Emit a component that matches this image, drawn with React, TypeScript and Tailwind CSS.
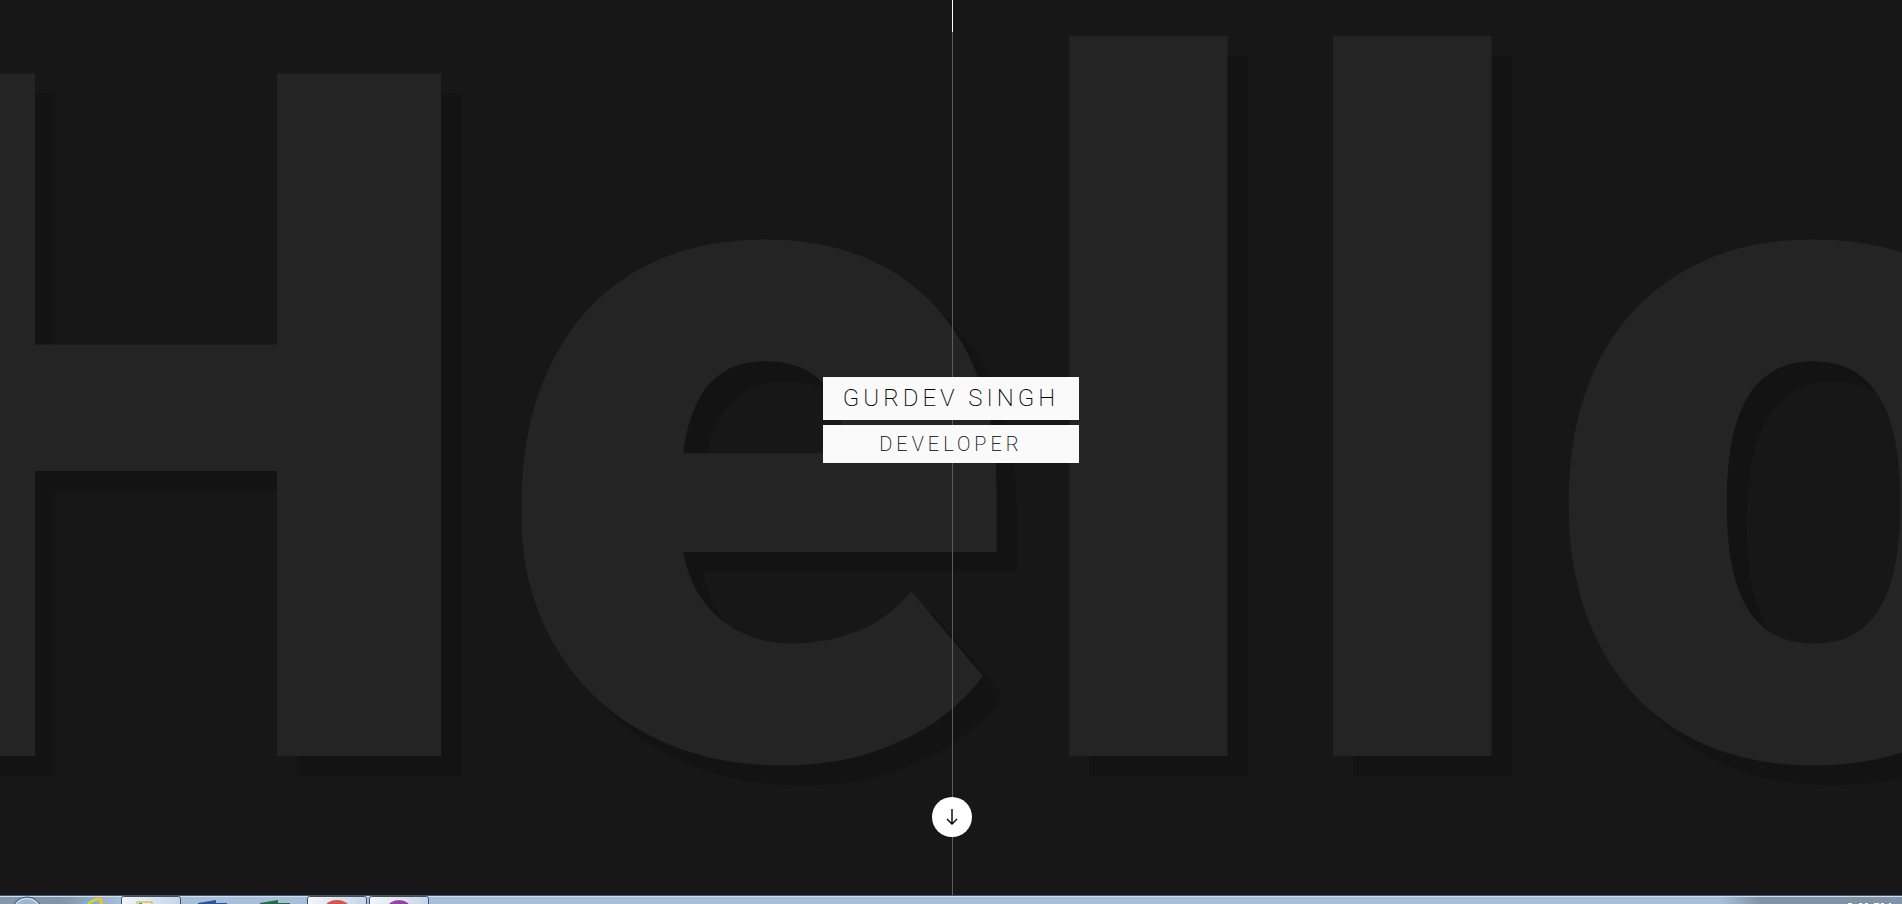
function Backdrop() {
  return (
    <div
      aria-hidden="true"
      className="absolute inset-0 flex items-center justify-center overflow-hidden pb-10 text-[960px] leading-none font-black whitespace-nowrap text-[#242424] select-none [text-shadow:20px_20px_0_#131313]"
    >
      <span>Hello</span>
    </div>
  );
}

function ScrollLine() {
  return (
    <div className="absolute inset-0 flex justify-center pl-0.5">
      <div className="h-full w-px bg-[#5c5c5c]">
        <div className="h-8 w-px bg-white" />
      </div>
    </div>
  );
}

function Intro() {
  return (
    <div className="relative flex flex-col gap-[5px] text-center font-extralight text-black uppercase">
      <h1 className="bg-[#fafafa] px-5 text-2xl leading-[43px] tracking-[4px]">Gurdev Singh</h1>
      <h2 className="bg-[#fafafa] px-5 text-xl leading-[38px] tracking-[4px]">Developer</h2>
    </div>
  );
}

function ScrollButton() {
  return (
    <a
      href="#about"
      aria-label="Scroll down"
      className="relative ml-0.5 flex size-10 items-center justify-center rounded-full bg-white text-black"
    >
      <svg viewBox="0 0 40 40" className="size-10" fill="none" stroke="currentColor" strokeWidth="1.4">
        <path d="M20 12v15M15 22l5 5 5-5" />
      </svg>
    </a>
  );
}

function Taskbar() {
  return (
    <footer className="h-[9px] shrink-0 overflow-hidden border-t border-[#46525e] bg-[#a6bfdc]">
      <svg className="block h-2 w-full" aria-hidden="true">
        <defs>
          <linearGradient id="edge">
            <stop offset="0" stopColor="#8497ab" />
            <stop offset="0.5" stopColor="#8093a8" />
            <stop offset="1" stopColor="#a6bfdc" />
          </linearGradient>
          <linearGradient id="tray">
            <stop offset="0" stopColor="#a6bfdc" />
            <stop offset="1" stopColor="#8193a8" />
          </linearGradient>
          <linearGradient id="tab">
            <stop offset="0" stopColor="#f3f6fa" />
            <stop offset="1" stopColor="#c5d5e8" />
          </linearGradient>
        </defs>
        <rect width="120" height="8" fill="url(#edge)" />
        <svg x="100%" overflow="visible">
          <rect x="-182" width="40" height="8" fill="url(#tray)" />
          <rect x="-142" width="142" height="8" fill="#8193a8" />
          <path d="M-54 7.5h4M-43 7.5h3M-37 7.5h3M-28 7.5h5M-21 7.5h3M-13 7.5h2" stroke="#fff" />
        </svg>
        <rect width="100%" height="1" fill="#d2dfed" />
        <ellipse cx="27" cy="13" rx="14" ry="12" fill="#a9bfd3" stroke="#28587f" strokeWidth="1" />
        <ellipse cx="27" cy="13" rx="12" ry="10.5" fill="#a0b7cb" stroke="#dbe7f0" />
        <path d="M82 8q4-5 10-4l5 4" fill="#66b9e5" />
        <path d="M88 8Q98 1 101 4q1 2 0 4" fill="none" stroke="#f5c918" strokeWidth="2.5" />
        <rect x="121.5" y="0.5" width="59" height="10" rx="2" fill="url(#tab)" stroke="#3f4d5c" />
        <rect x="137" y="6" width="15" height="4" fill="#f5edc0" stroke="#c9a550" />
        <rect x="139" y="7" width="3" height="1" fill="#20b52a" />
        <path d="M198 8v-1l18-3v3h11v1z" fill="#2a5599" />
        <path d="M260 8v-1l18-3v3h12v1z" fill="#1e7145" />
        <rect x="307.5" y="0.5" width="59" height="10" rx="2" fill="url(#tab)" stroke="#3f4d5c" />
        <ellipse cx="337" cy="12" rx="12" ry="8" fill="#dc5246" />
        <rect x="369.5" y="0.5" width="59" height="10" rx="2" fill="url(#tab)" stroke="#3f4d5c" />
        <ellipse cx="399" cy="12" rx="12" ry="8.5" fill="#9b3fae" stroke="#fff" />
      </svg>
    </footer>
  );
}

export default function App() {
  return (
    <div className="flex h-screen flex-col bg-[#171717] font-['Roboto',sans-serif]">
      <main className="relative flex flex-1 flex-col items-center overflow-hidden">
        <Backdrop />
        <ScrollLine />
        <div className="flex flex-1 items-center pt-[42px]">
          <Intro />
        </div>
        <div className="pb-[58px]">
          <ScrollButton />
        </div>
      </main>
      <Taskbar />
    </div>
  );
}
